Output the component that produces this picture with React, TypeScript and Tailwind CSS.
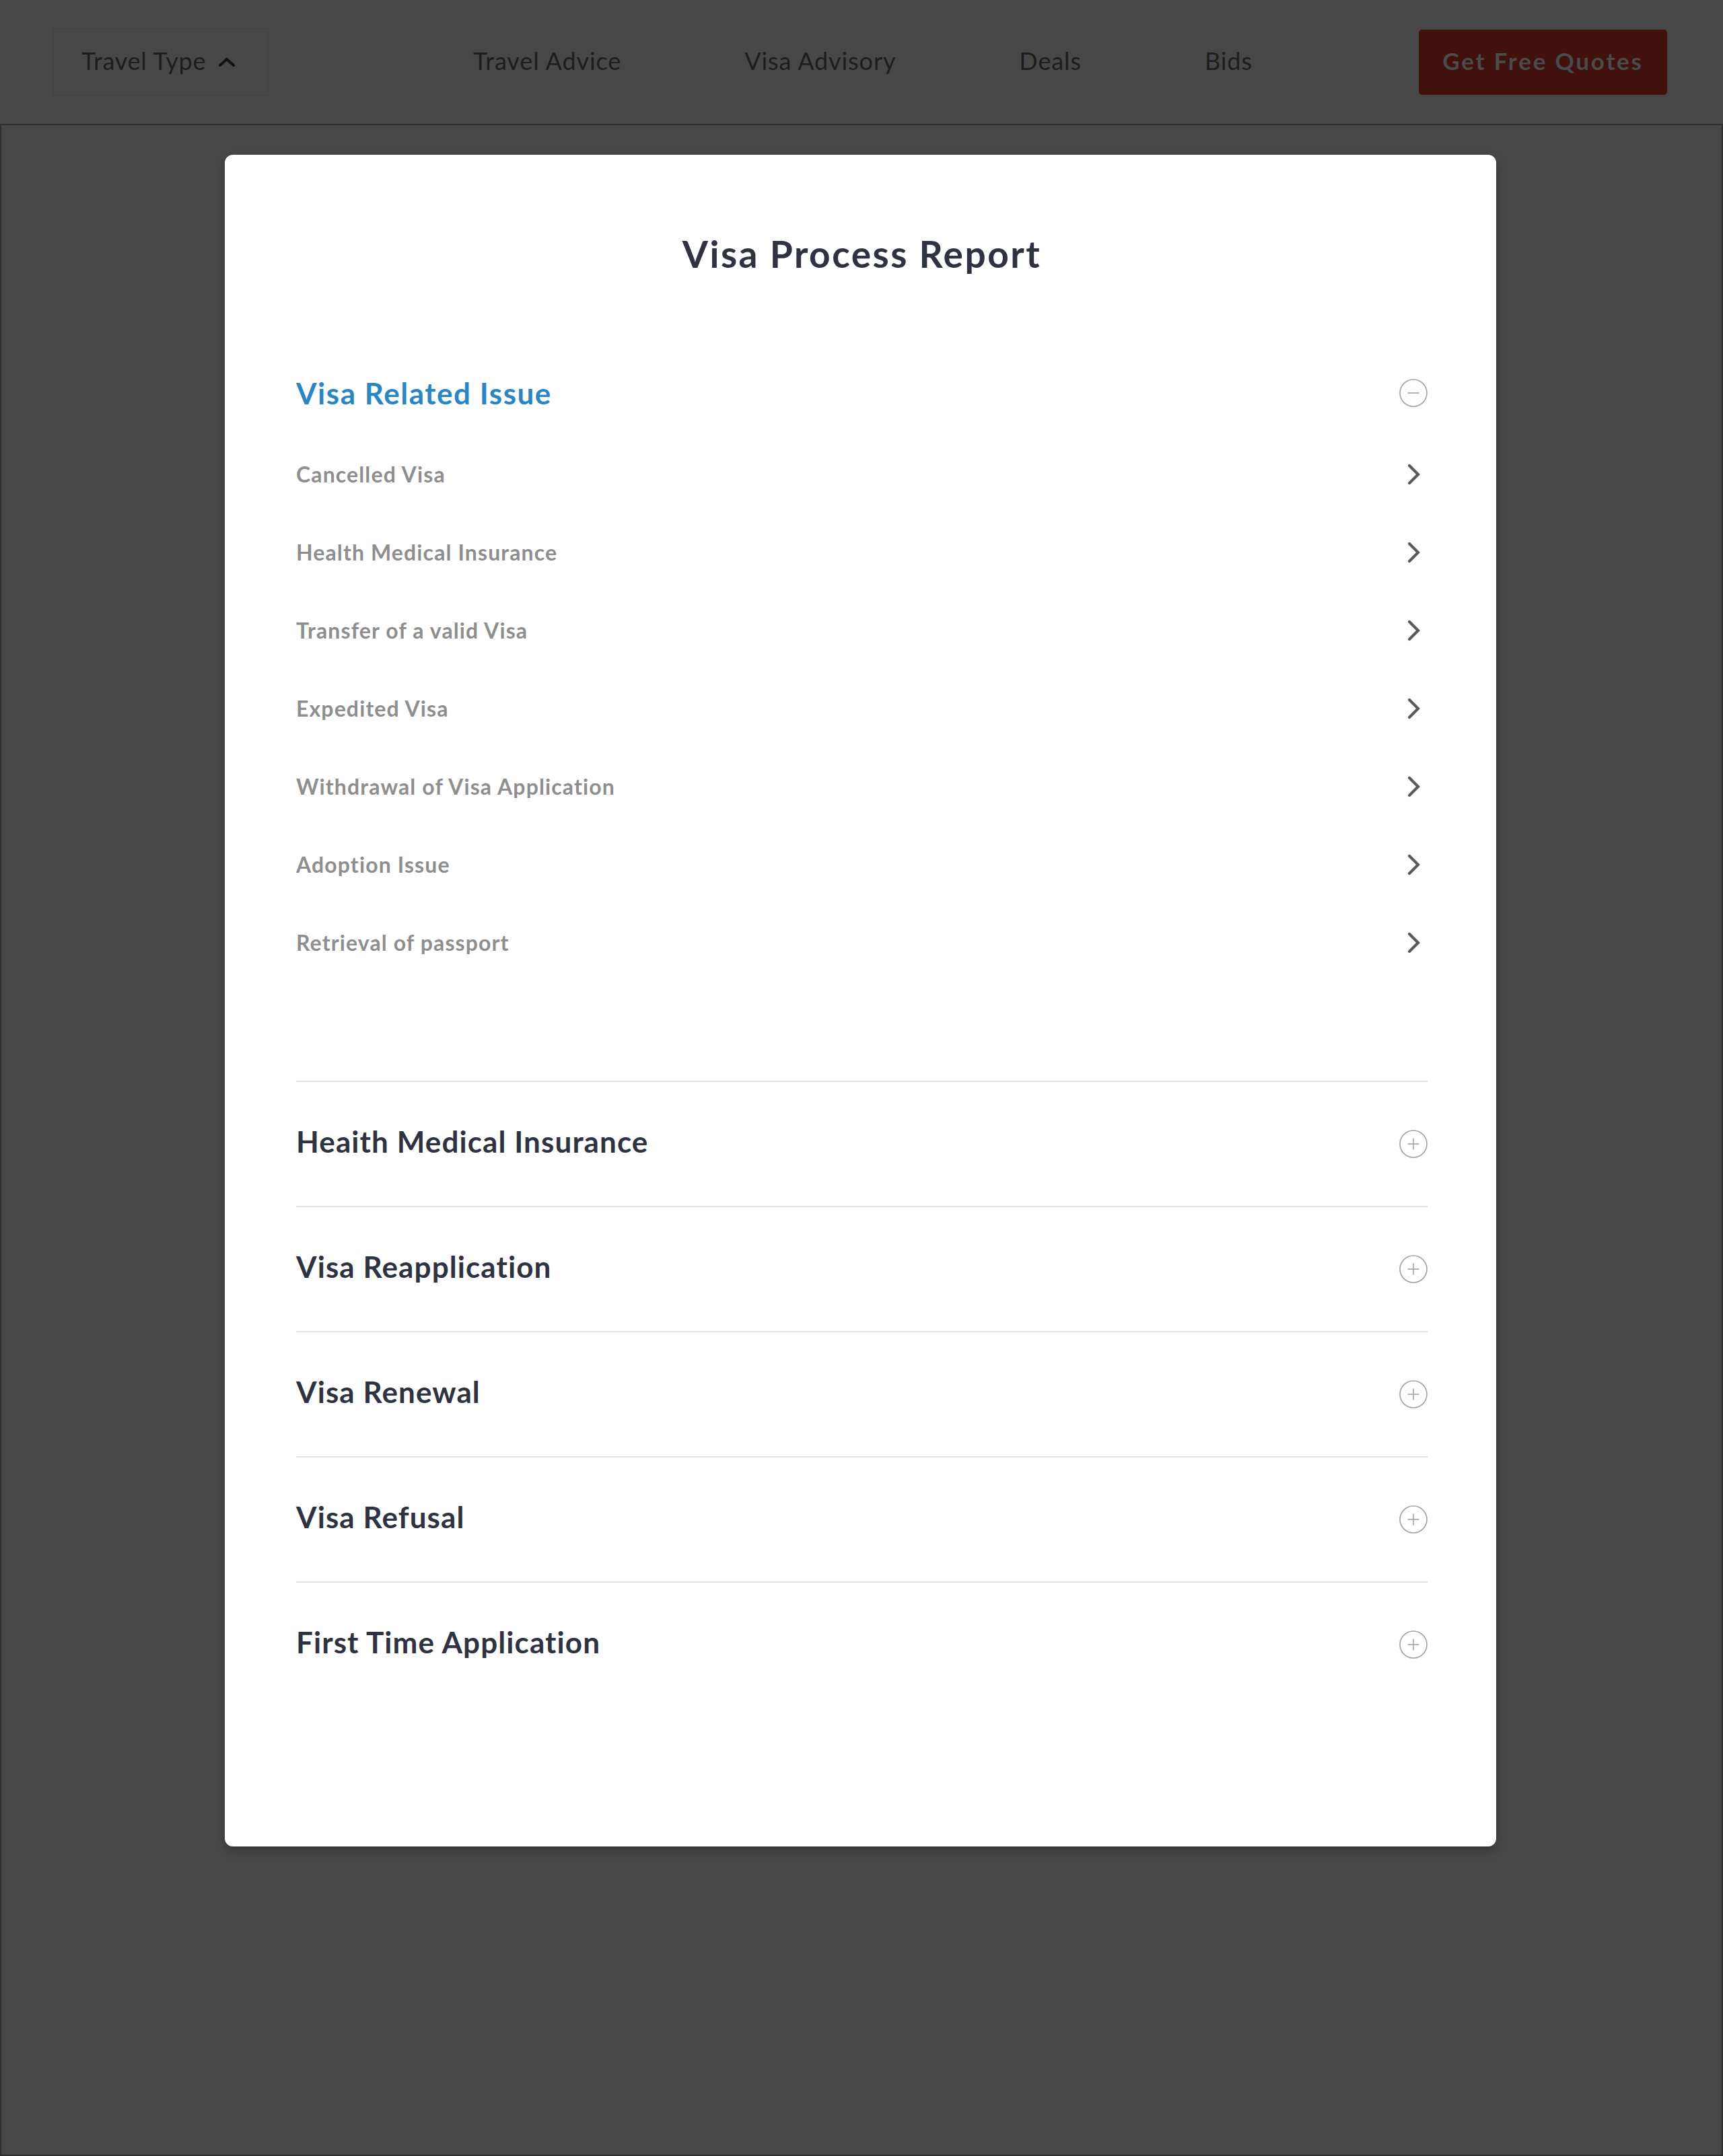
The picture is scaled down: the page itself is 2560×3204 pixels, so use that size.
import React, { useState } from 'react';

const issues = [
  'Cancelled Visa',
  'Health Medical Insurance',
  'Transfer of a valid Visa',
  'Expedited Visa',
  'Withdrawal of Visa Application',
  'Adoption Issue',
  'Retrieval of passport',
];

const sections = [
  'Heaith Medical Insurance',
  'Visa Reapplication',
  'Visa Renewal',
  'Visa Refusal',
  'First Time Application',
];

const navLinks = ['Travel Advice', 'Visa Advisory', 'Deals', 'Bids'];

const CircleIcon: React.FC<{ open: boolean }> = ({ open }) => (
  <svg width="42" height="42" viewBox="0 0 42 42" fill="none">
    <circle cx="21" cy="21" r="20" stroke="#a2a2a2" strokeWidth="1.6" />
    <line x1="12.5" y1="21" x2="29.5" y2="21" stroke="#a2a2a2" strokeWidth="1.6" />
    {!open && <line x1="21" y1="12.5" x2="21" y2="29.5" stroke="#a2a2a2" strokeWidth="1.6" />}
  </svg>
);

const ChevronRight = () => (
  <svg width="22" height="32" viewBox="0 0 22 32" fill="none">
    <path d="M5 3 L18 16 L5 29" stroke="#595959" strokeWidth="4.2" strokeLinecap="round" strokeLinejoin="miter" />
  </svg>
);

const ChevronUp = () => (
  <svg width="26" height="14" viewBox="0 0 26 14" fill="none">
    <path d="M3 12 L13 3 L23 12" stroke="#111111" strokeWidth="4" strokeLinecap="round" />
  </svg>
);

export default function App() {
  const [open, setOpen] = useState(true);

  return (
    <div className="w-[2560px] h-[3204px] bg-[#474747] flex flex-col" style={{ fontFamily: 'Lato, "Open Sans", sans-serif' }}>
      {/* Top bar */}
      <header className="h-[184px] shrink-0 flex items-center pl-[79px] pr-[83px]">
        <button className="w-[320px] h-[100px] border border-[#414141] flex items-center pl-[41px] gap-[18px] text-[36px] text-[#1d1d1d]">
          <span className="tracking-[0.02em] -mt-[4px]">Travel Type</span>
          <ChevronUp />
        </button>

        <nav className="ml-[304px] -mt-[4px] flex items-center gap-[183px] text-[36px] text-[#1d1d1d] tracking-[0.025em]">
          {navLinks.map(link => (
            <a key={link} className="leading-none">
              {link}
            </a>
          ))}
        </nav>

        <button className="ml-auto w-[369px] h-[97px] rounded-[5px] bg-[#41110e] text-[35px] font-bold tracking-[0.08em] text-[#4b4b4b] pb-[3px]">
          Get Free Quotes
        </button>
      </header>

      {/* Page body behind overlay */}
      <main className="flex-1 border-2 border-[#2f2f2f] pt-[44px]">
        <div className="ml-[332px] w-[1889px] h-[2514px] bg-white rounded-[12px] shadow-[0_6px_14px_rgba(0,0,0,0.25)] pt-[115px] pl-[106px] pr-[102px]">
          <h1 className="text-center text-[55px] leading-[64px] font-bold text-[#2e3241] tracking-[0.045em]">
            Visa Process Report
          </h1>

          {/* Visa Related Issue */}
          <div className="mt-[112px] pb-[147px]">
            <div
              className="h-[126px] flex items-center justify-between cursor-pointer"
              onClick={() => setOpen(!open)}
            >
              <span className="text-[44px] font-bold text-[#2b85c3] tracking-[0.035em]">Visa Related Issue</span>
              <CircleIcon open={open} />
            </div>
            {open &&
              issues.map(item => (
                <div key={item} className="h-[116px] flex items-center justify-between">
                  <span className="text-[32px] font-bold text-[#8e8e8e] tracking-[0.035em]">{item}</span>
                  <span className="w-[42px] flex justify-center">
                    <ChevronRight />
                  </span>
                </div>
              ))}
          </div>

          {sections.map(title => (
            <div key={title} className="border-t-2 border-[#e2e2e2] h-[186px] flex items-center justify-between">
              <span className="text-[44px] font-bold text-[#2e3241] tracking-[0.025em] -mt-[9px]">{title}</span>
              <CircleIcon open={false} />
            </div>
          ))}
        </div>
      </main>
    </div>
  );
}
